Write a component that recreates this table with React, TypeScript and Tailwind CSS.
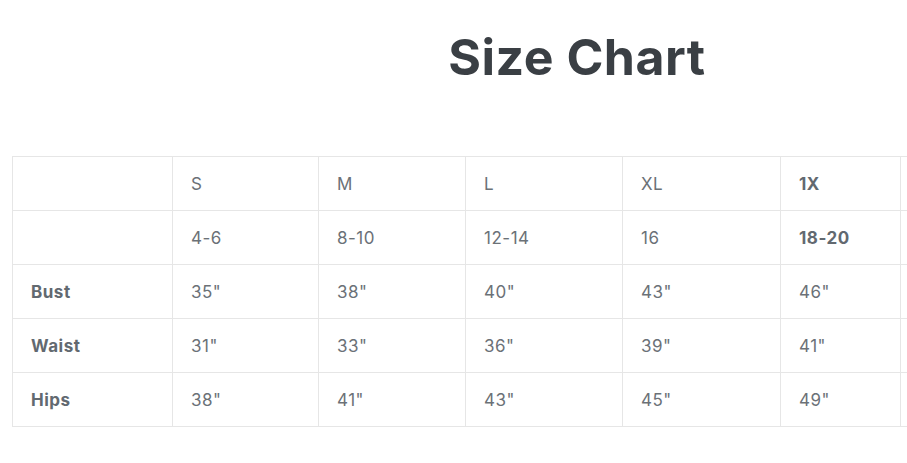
const sizes = ["S", "M", "L", "XL", "1X"];
const numbers = ["4-6", "8-10", "12-14", "16", "18-20"];
const rows = [
  { label: "Bust", values: ['35"', '38"', '40"', '43"', '46"'] },
  { label: "Waist", values: ['31"', '33"', '36"', '39"', '41"'] },
  { label: "Hips", values: ['38"', '41"', '43"', '45"', '49"'] },
];
const widths = ["w-[160px]", "w-[146px]", "w-[147px]", "w-[157px]", "w-[158px]", "w-[120px]", "w-[150px]"];

function Cell({ children, col, bold }: { children?: React.ReactNode; col: number; bold?: boolean }) {
  return (
    <td
      className={`${widths[col]} h-[54px] border border-[#e6e6e6] pl-[18px] pt-[2px] align-middle text-[17px] tracking-[0.03em] ${
        bold ? "font-bold text-[#626970]" : "text-[#6b7177]"
      }`}
    >
      {children}
    </td>
  );
}

export default function App() {
  return (
    <div className="w-[907px] h-[463px] overflow-hidden bg-white" style={{ fontFamily: "Inter, 'Liberation Sans', sans-serif" }}>
      {/* Title */}
      <div className="pl-[247px] pt-[24px] text-center">
        <h1 className="text-[50px] leading-[66px] font-bold text-[#3a3f44] tracking-[0.01em]">Size Chart</h1>
      </div>

      {/* Table, wider than the window like the original */}
      <div className="pl-[12px] pt-[66px]">
        <table className="border-collapse table-fixed w-[1038px]">
          <tbody>
            <tr>
              <Cell col={0} />
              {sizes.map((s, i) => (
                <Cell key={s} col={i + 1} bold={i >= 4}>
                  {s}
                </Cell>
              ))}
              <Cell col={6} />
            </tr>
            <tr>
              <Cell col={0} />
              {numbers.map((n, i) => (
                <Cell key={n} col={i + 1} bold={i >= 4}>
                  {n}
                </Cell>
              ))}
              <Cell col={6} />
            </tr>
            {rows.map((r) => (
              <tr key={r.label}>
                <Cell col={0} bold>
                  {r.label}
                </Cell>
                {r.values.map((v, i) => (
                  <Cell key={i} col={i + 1}>
                    {v}
                  </Cell>
                ))}
                <Cell col={6} />
              </tr>
            ))}
          </tbody>
        </table>
      </div>
    </div>
  );
}
